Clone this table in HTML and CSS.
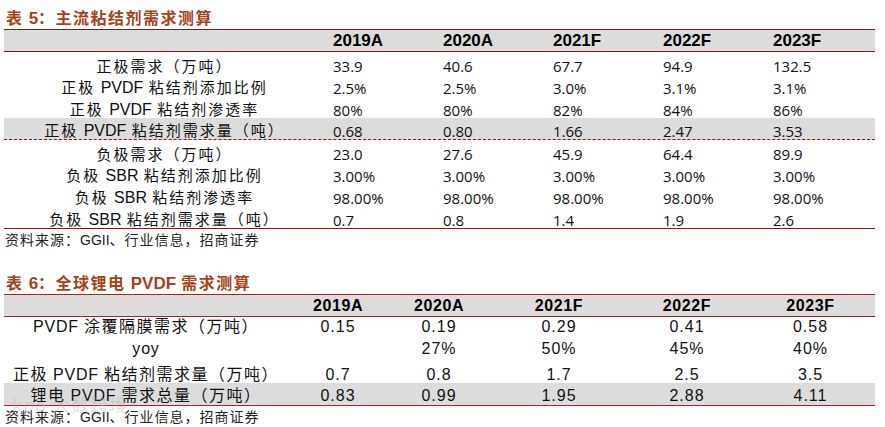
FILE: index.html
```html
<!DOCTYPE html>
<html lang="zh-CN">
<head>
<meta charset="utf-8">
<title>粘结剂需求测算</title>
<link rel="stylesheet" href="styles.css">
</head>
<body>
<div class="page">
  <div class="title title1">表 <span class="lat">5</span>：主流粘结剂需求测算</div>
  <div class="t1">
    <div class="row head">
      <div class="lab"></div><div class="v">2019A</div><div class="v">2020A</div><div class="v">2021F</div><div class="v">2022F</div><div class="v">2023F</div>
    </div>
    <div class="row">
      <div class="lab">正极需求（万吨）</div><div class="v">33.9</div><div class="v">40.6</div><div class="v">67.7</div><div class="v">94.9</div><div class="v">132.5</div>
    </div>
    <div class="row">
      <div class="lab">正极 <span class="lat">PVDF</span> 粘结剂添加比例</div><div class="v">2.5%</div><div class="v">2.5%</div><div class="v">3.0%</div><div class="v">3.1%</div><div class="v">3.1%</div>
    </div>
    <div class="row">
      <div class="lab">正极 <span class="lat">PVDF</span> 粘结剂渗透率</div><div class="v">80%</div><div class="v">80%</div><div class="v">82%</div><div class="v">84%</div><div class="v">86%</div>
    </div>
    <div class="row grey">
      <div class="lab">正极 <span class="lat">PVDF</span> 粘结剂需求量（吨）</div><div class="v">0.68</div><div class="v">0.80</div><div class="v">1.66</div><div class="v">2.47</div><div class="v">3.53</div>
    </div>
    <div class="row">
      <div class="lab">负极需求（万吨）</div><div class="v">23.0</div><div class="v">27.6</div><div class="v">45.9</div><div class="v">64.4</div><div class="v">89.9</div>
    </div>
    <div class="row">
      <div class="lab">负极 <span class="lat">SBR</span> 粘结剂添加比例</div><div class="v">3.00%</div><div class="v">3.00%</div><div class="v">3.00%</div><div class="v">3.00%</div><div class="v">3.00%</div>
    </div>
    <div class="row">
      <div class="lab">负极 <span class="lat">SBR</span> 粘结剂渗透率</div><div class="v">98.00%</div><div class="v">98.00%</div><div class="v">98.00%</div><div class="v">98.00%</div><div class="v">98.00%</div>
    </div>
    <div class="row">
      <div class="lab">负极 <span class="lat">SBR</span> 粘结剂需求量（吨）</div><div class="v">0.7</div><div class="v">0.8</div><div class="v">1.4</div><div class="v">1.9</div><div class="v">2.6</div>
    </div>
  </div>
  <div class="source">资料来源：<span class="lat">GGII</span>、行业信息，招商证券</div>

  <div class="title title2">表 <span class="lat">6</span>：全球锂电 <span class="lat">PVDF</span> 需求测算</div>
  <div class="t2">
    <div class="row head">
      <div class="lab"></div><div class="v">2019A</div><div class="v">2020A</div><div class="v">2021F</div><div class="v">2022F</div><div class="v">2023F</div>
    </div>
    <div class="row r1">
      <div class="lab"><span class="lat">PVDF</span> 涂覆隔膜需求（万吨）</div><div class="v">0.15</div><div class="v">0.19</div><div class="v">0.29</div><div class="v">0.41</div><div class="v">0.58</div>
    </div>
    <div class="row r2">
      <div class="lab"><span class="lat">yoy</span></div><div class="v"></div><div class="v">27%</div><div class="v">50%</div><div class="v">45%</div><div class="v">40%</div>
    </div>
    <div class="row r3">
      <div class="lab">正极 <span class="lat">PVDF</span> 粘结剂需求量（万吨）</div><div class="v">0.7</div><div class="v">0.8</div><div class="v">1.7</div><div class="v">2.5</div><div class="v">3.5</div>
    </div>
    <div class="row r4 grey">
      <div class="lab">锂电 <span class="lat">PVDF</span> 需求总量（万吨）</div><div class="v">0.83</div><div class="v">0.99</div><div class="v">1.95</div><div class="v">2.88</div><div class="v">4.11</div>
    </div>
  </div>
  <div class="source">资料来源：<span class="lat">GGII</span>、行业信息，招商证券</div>
  <div class="watermark">kpo 大数跨境</div>
</div>
</body>
</html>
```

FILE: styles.css
```css
* { box-sizing: content-box; }
html, body { margin: 0; padding: 0; background: #ffffff; }
body { color: #111111; font-family: "Noto Sans CJK SC", "Liberation Sans", sans-serif; }

.page {
  position: relative;
  width: 871px;
  margin-left: 4px;
}

.lat { font-family: "Liberation Sans", Arial, sans-serif; letter-spacing: 0; }

.title {
  height: 20px;
  color: #a4421a;
  font-weight: 700;
  font-size: 16px;
  line-height: 20px;
  letter-spacing: 1.5px;
  padding-left: 2px;
  padding-bottom: 2px;
  white-space: nowrap;
}
.title .lat { font-weight: 700; font-size: 17px; }
.title1 { padding-top: 7px; }
.title2 { margin-top: 23px; }

/* ---------- Table 5 ---------- */
.t1 {
  border-top: 1px solid #861818;
  border-bottom: 1px solid #861818;
}
.t1 .row {
  display: grid;
  grid-template-columns: 321px repeat(5, 110px);
  height: 22px;
  align-items: end;
}
.t1 .lab {
  text-align: center;
  font-size: 15px;
  line-height: 16px;
  letter-spacing: 2px;
  white-space: nowrap;
}
.t1 .lab .lat { font-size: 16px; }
.t1 .v {
  padding-left: 8px;
  font-family: "Open Sans", "Liberation Sans", sans-serif;
  font-size: 15px;
  line-height: 16px;
  color: #111111;
}
.t1 .head {
  height: 21px;
  background: #dcdcdc;
  border-bottom: 1px solid #861818;
  align-items: center;
}
.t1 .head .v {
  font-family: "Liberation Sans", Arial, sans-serif;
  font-weight: 700;
  font-size: 17px;
  line-height: 20px;
  color: #000000;
}
.t1 .grey {
  height: 21px;
  background: #dcdcdc;
  border-bottom: 1px dashed #861818;
}

/* ---------- Table 6 ---------- */
.t2 {
  border-top: 1px solid #a8242a;
  border-bottom: 1px solid #a8242a;
}
.t2 .row {
  display: grid;
  grid-template-columns: 284px 100px 102px 138px 118px 129px;
  align-items: end;
}
.t2 .lab {
  text-align: center;
  font-size: 16px;
  line-height: 16px;
  letter-spacing: 1.5px;
  white-space: nowrap;
}
.t2 .lab .lat { font-size: 16px; letter-spacing: 0.8px; }
.t2 .v {
  text-align: center;
  font-family: "Liberation Sans", Arial, sans-serif;
  font-size: 16px;
  line-height: 16px;
  letter-spacing: 1px;
  color: #111111;
}
.t2 .head {
  height: 21px;
  background: #dcdcdc;
  border-bottom: 1px solid #a8242a;
  align-items: center;
}
.t2 .head .v {
  font-weight: 700;
  font-size: 16px;
  line-height: 20px;
  letter-spacing: 0.6px;
  color: #000000;
}
.t2 .r1 { height: 18px; padding-bottom: 3px; }
.t2 .r2 { height: 19px; padding-bottom: 2px; }
.t2 .r3 { height: 24px; }
.t2 .r4 { height: 21px; padding-bottom: 1px; }
.t2 .grey { background: #dcdcdc; }

/* ---------- Source ---------- */
.source {
  height: 20px;
  font-size: 14px;
  line-height: 20px;
  letter-spacing: 1px;
  color: #222222;
  padding-left: 1px;
  white-space: nowrap;
}
.source .lat { font-size: 14px; }

.watermark {
  position: absolute;
  left: 8px;
  top: 394px;
  font-size: 18px;
  line-height: 20px;
  letter-spacing: 1px;
  color: rgba(170, 170, 170, 0.35);
  pointer-events: none;
}
```
